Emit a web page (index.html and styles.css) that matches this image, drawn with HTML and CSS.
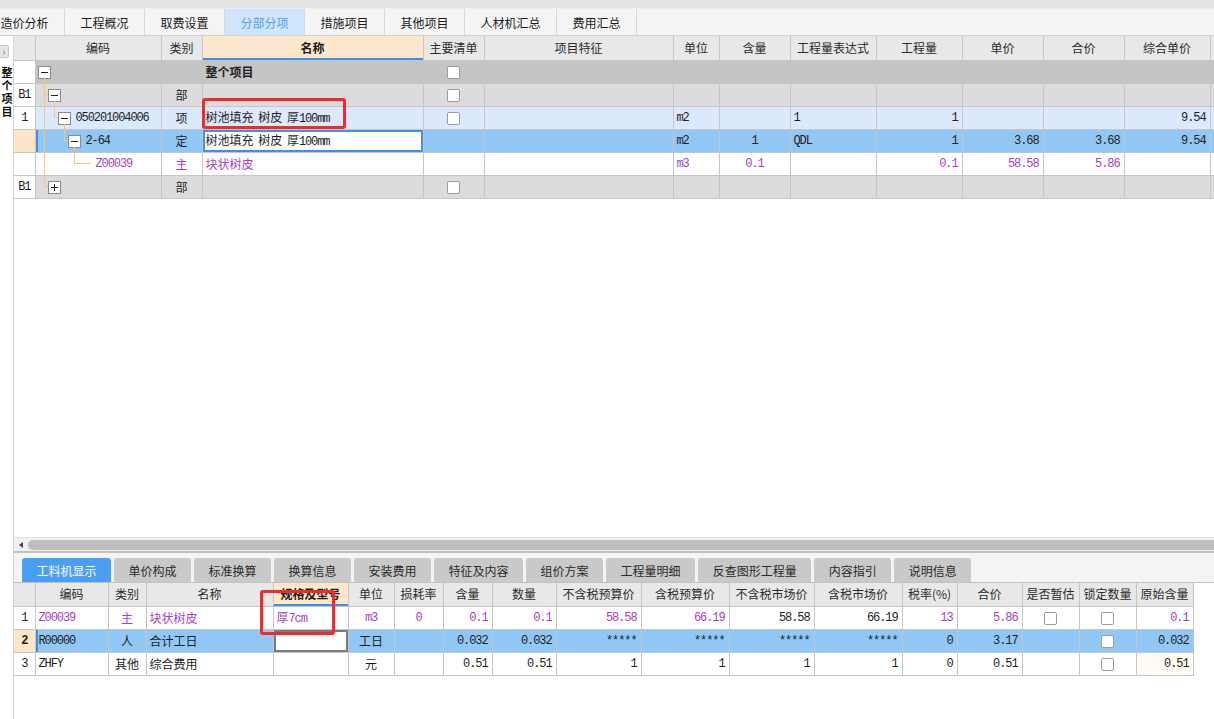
FILE: index.html
```html
<!DOCTYPE html>
<html lang="zh-CN">
<head>
<meta charset="utf-8">
<title>分部分项</title>
<link rel="stylesheet" href="styles.css">
</head>
<body>
<div class="app">
  <div class="topstrip"></div>
  <nav class="tabs">
    <div class="tab first">造价分析</div>
    <div class="tab">工程概况</div>
    <div class="tab">取费设置</div>
    <div class="tab active">分部分项</div>
    <div class="tab">措施项目</div>
    <div class="tab">其他项目</div>
    <div class="tab wide">人材机汇总</div>
    <div class="tab">费用汇总</div>
  </nav>
  <div class="main">
    <aside class="side">
      <div class="side-btn">›</div>
      <div class="side-title">整个项目</div>
    </aside>
    <div class="work">
      <div class="pane-top">
        <table class="grid gtop">
          <colgroup>
            <col style="width:21px"><col style="width:126px"><col style="width:41px"><col style="width:221px"><col style="width:61px"><col style="width:189px"><col style="width:46px"><col style="width:71px"><col style="width:86px"><col style="width:86px"><col style="width:81px"><col style="width:81px"><col style="width:86px"><col style="width:60px">
          </colgroup>
          <thead>
            <tr>
              <th></th><th>编码</th><th>类别</th><th class="hl">名称</th><th>主要清单</th><th>项目特征</th><th>单位</th><th>含量</th><th>工程量表达式</th><th>工程量</th><th>单价</th><th>合价</th><th>综合单价</th><th></th>
            </tr>
          </thead>
          <tbody>
            <tr class="r-root">
              <td class="no"></td>
              <td class="lv1"><svg class="tg" width="13" height="13" viewBox="0 0 13 13"><rect x="0.5" y="0.5" width="12" height="12" fill="#fff" stroke="#8a8a8a"/><path d="M3 6.5h7" stroke="#222"/></svg></td>
              <td></td><td class="b">整个项目</td><td class="c"><span class="cb"></span></td><td></td><td></td><td></td><td></td><td></td><td></td><td></td><td></td><td></td>
            </tr>
            <tr class="r-part">
              <td class="no m">B1</td>
              <td class="lv2"><svg class="tg" width="13" height="13" viewBox="0 0 13 13"><rect x="0.5" y="0.5" width="12" height="12" fill="#fff" stroke="#8a8a8a"/><path d="M3 6.5h7" stroke="#222"/></svg></td>
              <td class="c">部</td><td></td><td class="c"><span class="cb"></span></td><td></td><td></td><td></td><td></td><td></td><td></td><td></td><td></td><td></td>
            </tr>
            <tr class="r-item">
              <td class="no m">1</td>
              <td class="lv3"><svg class="tg" width="13" height="13" viewBox="0 0 13 13"><rect x="0.5" y="0.5" width="12" height="12" fill="#fff" stroke="#8a8a8a"/><path d="M3 6.5h7" stroke="#222"/></svg><span class="m code">050201004006</span></td>
              <td class="c">项</td><td class="ws">树池填充 树皮 厚<span class="m">100mm</span></td><td class="c"><span class="cb"></span></td><td></td><td class="m">m2</td><td></td><td class="m">1</td><td class="m r">1</td><td></td><td></td><td class="m r">9.54</td><td></td>
            </tr>
            <tr class="r-sel">
              <td class="no cur"></td>
              <td class="lv4 bar"><svg class="tg" width="13" height="13" viewBox="0 0 13 13"><rect x="0.5" y="0.5" width="12" height="12" fill="#fff" stroke="#8a8a8a"/><path d="M3 6.5h7" stroke="#222"/></svg><span class="m code">2-64</span></td>
              <td class="c">定</td><td class="edit ws">树池填充 树皮 厚<span class="m">100mm</span></td><td></td><td></td><td class="m">m2</td><td class="m c">1</td><td class="m">QDL</td><td class="m r">1</td><td class="m r">3.68</td><td class="m r">3.68</td><td class="m r">9.54</td><td></td>
            </tr>
            <tr class="r-sub">
              <td class="no"></td>
              <td class="lv5 m">Z00039</td>
              <td class="c">主</td><td>块状树皮</td><td></td><td></td><td class="m">m3</td><td class="m c">0.1</td><td></td><td class="m r">0.1</td><td class="m r">58.58</td><td class="m r">5.86</td><td></td><td></td>
            </tr>
            <tr class="r-part">
              <td class="no m">B1</td>
              <td class="lv2"><svg class="tg" width="13" height="13" viewBox="0 0 13 13"><rect x="0.5" y="0.5" width="12" height="12" fill="#fff" stroke="#8a8a8a"/><path d="M3 6.5h7M6.5 3v7" stroke="#222"/></svg></td>
              <td class="c">部</td><td></td><td class="c"><span class="cb"></span></td><td></td><td></td><td></td><td></td><td></td><td></td><td></td><td></td><td></td>
            </tr>
          </tbody>
        </table>
      </div>
      <div class="hscroll"><span class="harrow"></span><div class="thumb"></div></div>
      <div class="splitter"></div>
      <div class="subtabs">
        <div class="stab active">工料机显示</div>
        <div class="stab">单价构成</div>
        <div class="stab">标准换算</div>
        <div class="stab">换算信息</div>
        <div class="stab">安装费用</div>
        <div class="stab">特征及内容</div>
        <div class="stab">组价方案</div>
        <div class="stab">工程量明细</div>
        <div class="stab">反查图形工程量</div>
        <div class="stab">内容指引</div>
        <div class="stab">说明信息</div>
      </div>
      <div class="pane-bottom">
        <table class="grid gbot">
          <colgroup>
            <col style="width:21px"><col style="width:73px"><col style="width:38px"><col style="width:127px"><col style="width:75px"><col style="width:46px"><col style="width:49px"><col style="width:49px"><col style="width:64px"><col style="width:85px"><col style="width:88px"><col style="width:85px"><col style="width:88px"><col style="width:55px"><col style="width:65px"><col style="width:57px"><col style="width:57px"><col style="width:57px">
          </colgroup>
          <thead>
            <tr>
              <th></th><th>编码</th><th>类别</th><th>名称</th><th class="hl">规格及型号</th><th>单位</th><th>损耗率</th><th>含量</th><th>数量</th><th>不含税预算价</th><th>含税预算价</th><th>不含税市场价</th><th>含税市场价</th><th>税率(%)</th><th>合价</th><th>是否暂估</th><th>锁定数量</th><th>原始含量</th>
            </tr>
          </thead>
          <tbody>
            <tr class="r-sub">
              <td class="no m">1</td><td class="m">Z00039</td><td class="c">主</td><td>块状树皮</td><td>厚<span class="m">7cm</span></td><td class="m c">m3</td><td class="m c">0</td><td class="m r">0.1</td><td class="m r">0.1</td><td class="m r">58.58</td><td class="m r">66.19</td><td class="m r k">58.58</td><td class="m r k">66.19</td><td class="m r">13</td><td class="m r">5.86</td><td class="c"><span class="cb"></span></td><td class="c"><span class="cb"></span></td><td class="m r">0.1</td>
            </tr>
            <tr class="r-sel">
              <td class="no cur m b">2</td><td class="m bar">R00000</td><td class="c">人</td><td>合计工日</td><td class="edit2"></td><td class="c">工日</td><td></td><td class="m r">0.032</td><td class="m r">0.032</td><td class="m r">*****</td><td class="m r">*****</td><td class="m r">*****</td><td class="m r">*****</td><td class="m r">0</td><td class="m r">3.17</td><td></td><td class="c"><span class="cb"></span></td><td class="m r">0.032</td>
            </tr>
            <tr class="r-plain">
              <td class="no m">3</td><td class="m">ZHFY</td><td class="c">其他</td><td>综合费用</td><td></td><td class="c">元</td><td></td><td class="m r">0.51</td><td class="m r">0.51</td><td class="m r">1</td><td class="m r">1</td><td class="m r">1</td><td class="m r">1</td><td class="m r">0</td><td class="m r">0.51</td><td></td><td class="c"><span class="cb"></span></td><td class="m r cream">0.51</td>
            </tr>
          </tbody>
        </table>
      </div>
    </div>
  </div>
  <svg class="tree" width="1214" height="719" viewBox="0 0 1214 719">
    <path d="M44.5 77V186.5H48M44.5 94.5H48M54.5 101V117.5H58M64.5 124V140.5H68M74.5 147V163.5H91" fill="none" stroke="#f9c675" stroke-width="1"/>
  </svg>
  <div class="mark mark1"></div>
  <div class="mark mark2"></div>
</div>
</body>
</html>
```

FILE: styles.css
```css
* { box-sizing: border-box; }
html, body { margin: 0; padding: 0; }
body {
  width: 1214px;
  height: 719px;
  overflow: hidden;
  background: #fff;
  font-family: "Noto Sans CJK SC", "Noto Sans", sans-serif;
  font-size: 12px;
  color: #1e1e1e;
}
.app {
  position: relative;
  width: 1214px;
  height: 719px;
  display: flex;
  flex-direction: column;
}
.topstrip { height: 8px; flex: none; background: #e4e4e4; }
.tabs {
  height: 28px;
  flex: none;
  display: flex;
  background: #f4f4f4;
  border-top: 1px solid #ececec;
  border-bottom: 1px solid #d2d2d2;
  overflow: hidden;
}
.tab {
  width: 80px;
  flex: none;
  display: flex;
  align-items: center;
  justify-content: center;
  border-right: 1px solid #d6d6d6;
  color: #1a1a1a;
}
.tab.first { margin-left: -15px; }
.tab.wide { width: 92px; }
.tab.active { background: #cfe5fb; color: #5a9fe2; }

.main { flex: 1; display: flex; min-height: 0; }
.side {
  width: 14px;
  flex: none;
  border-right: 1px solid #d6d6d6;
  display: flex;
  flex-direction: column;
  padding-top: 9px;
}
.side-btn {
  width: 9px;
  height: 13px;
  flex: none;
  background: #e6e6e6;
  border: 1px solid #c8c8c8;
  border-left: none;
  border-radius: 0 2px 2px 0;
  color: #7a7a7a;
  font-size: 11px;
  line-height: 10px;
  text-align: center;
}
.side-title {
  margin-top: 9px;
  width: 13px;
  writing-mode: vertical-rl;
  font-weight: bold;
  font-size: 11px;
  line-height: 13px;
  letter-spacing: 2px;
  color: #111;
}

.work { flex: 1; display: flex; flex-direction: column; min-width: 0; }
.pane-top { height: 501px; flex: none; overflow: hidden; }
.hscroll {
  height: 14px;
  flex: none;
  background: #f0f0f0;
  border-top: 1px solid #e0e0e0;
  display: flex;
  align-items: center;
  padding-left: 5px;
  overflow: hidden;
}
.harrow {
  width: 0;
  height: 0;
  border-top: 3px solid transparent;
  border-bottom: 3px solid transparent;
  border-right: 4px solid #444;
  flex: none;
}
.thumb {
  margin-left: 5px;
  flex: 1;
  height: 10px;
  margin-right: -20px;
  background: #bdbdbd;
  border-radius: 5px;
}
.splitter { height: 2px; flex: none; background: #c2c2c2; }
.subtabs {
  height: 30px;
  flex: none;
  display: flex;
  gap: 3px;
  padding: 5px 0 0 8px;
  background: #f4f4f4;
  border-bottom: 1px solid #c2c2c2;
}
.stab {
  height: 24px;
  padding: 0 14.5px;
  display: flex;
  align-items: center;
  background: #c9c9c9;
  border-radius: 3px 3px 0 0;
  color: #2a2a2a;
  white-space: nowrap;
}
.stab.active { background: #4a9ff5; color: #fff; }
.pane-bottom { flex: 1; overflow: hidden; }

.grid {
  border-collapse: collapse;
  table-layout: fixed;
}
.gtop { width: 1256px; }
.gbot { width: 1179px; }
.grid th, .grid td {
  border: 1px solid #c6c6c6;
  height: 23px;
  padding: 0 3px;
  white-space: nowrap;
  overflow: hidden;
  text-align: left;
  vertical-align: middle;
  line-height: 14px;
}
.grid th {
  background: #e8e8e8;
  font-weight: normal;
  text-align: center;
  color: #2b2b2b;
}
.gtop th { height: 24px; border-top: none; }
.gbot th { border-top: none; }
.grid th:first-child, .grid td:first-child { border-left: none; }
.grid th.hl {
  background: #fde8cd;
  font-weight: bold;
  color: #1a1a1a;
  box-shadow: inset 0 -2px 0 #3b8fea;
}

.m {
  font-family: "Liberation Mono", "Noto Sans CJK SC", monospace;
  font-size: 12px;
  letter-spacing: -1.1px;
}
.ws { word-spacing: 2px; }
.c { text-align: center !important; }
.r { text-align: right !important; }
.r.m { padding-right: 4px; }
.b { font-weight: bold; }
.no { background: #fff; text-align: center !important; }
.no.cur { background: #fde6c8; }
.bar { box-shadow: inset 2px 0 0 #3b8fea; }
.code { margin-left: 5px; vertical-align: middle; }
.lv1 { padding-left: 2px !important; }
.lv2 { padding-left: 12px !important; }
.lv3 { padding-left: 22px !important; }
.lv4 { padding-left: 32px !important; }
.lv5 { padding-left: 60px !important; }
.tg { vertical-align: middle; display: inline-block; }

.cb {
  display: inline-block;
  width: 13px;
  height: 13px;
  border: 1px solid #9c9c9c;
  border-radius: 2px;
  background: #fff;
  vertical-align: middle;
}

.r-root td { background: #c4c4c4; }
.r-part td { background: #dcdcdc; }
.r-item td { background: #dce9fc; }
.r-sel td { background: #91c7f5; }
.r-sub td { background: #fff; color: #a53fc5; }
.r-plain td { background: #fff; }
.r-root td.no, .r-part td.no, .r-item td.no, .r-sub td.no, .r-plain td.no { background: #fff; color: #1e1e1e; }
.r-sel td.no { background: #fde6c8; }
.r-sel td.edit { background: #fff; box-shadow: inset 0 0 0 2px #3d8ff0; }
.r-sel td.edit2 { background: #fff; box-shadow: inset 0 0 0 2px #7a7a7a; }
.r-sub td.k { color: #1e1e1e; }
td.cream { background: #fffaf2; }

.tree {
  position: absolute;
  left: 0;
  top: 0;
  pointer-events: none;
}
.mark {
  position: absolute;
  border: 3px solid #f02a2a;
  border-radius: 3px;
  pointer-events: none;
}
.mark1 { left: 202px; top: 98px; width: 144px; height: 31px; }
.mark2 { left: 260px; top: 590px; width: 75px; height: 45px; }
```
